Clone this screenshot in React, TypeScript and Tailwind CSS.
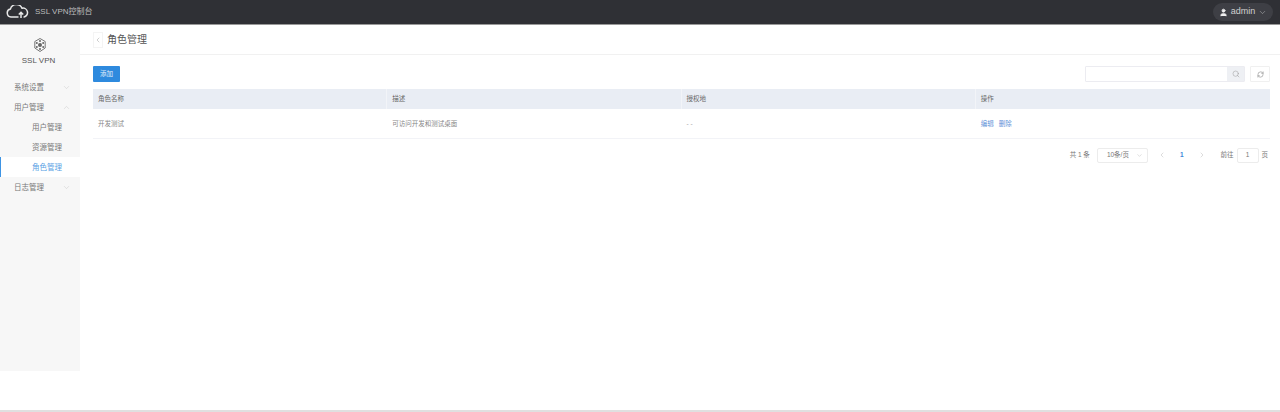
import React from "react";
import { ChevronDown, ChevronLeft, ChevronRight, ChevronUp, RefreshCw, Search, User } from "lucide-react";

const font = { fontFamily: '"Liberation Sans", "Noto Sans CJK SC", sans-serif' };

const CloudLogo = () => (
  <svg className="mb-[1px]" width="23" height="13" viewBox="0 0 23 13" fill="none" stroke="#e8e8e8" strokeWidth="1.500">
    <path d="M12.500 12H5a4 4 0 0 1-.6-7.900A6.200 6.200 0 0 1 16 3.200 4.500 4.500 0 0 1 18 12h-.5" />
    <path d="M12.800 9.500l2.200-2.200 2.200 2.200M15 7.500V13" />
  </svg>
);

const HexLogo = () => (
  <svg width="14" height="16" viewBox="0 0 14 16" fill="none" stroke="#777" strokeWidth="1">
    <path d="M7 1.500l5.200 3v6.500L7 14.500l-5.200-3.500V4.500z" />
    <circle cx="7" cy="8" r="2" fill="#666" stroke="none" />
    <circle cx="7" cy="4" r="1" fill="#666" stroke="none" />
    <circle cx="7" cy="12" r="1" fill="#666" stroke="none" />
    <circle cx="3.800" cy="6" r="1" fill="#666" stroke="none" />
    <circle cx="10.200" cy="6" r="1" fill="#666" stroke="none" />
    <circle cx="3.800" cy="10" r="1" fill="#666" stroke="none" />
    <circle cx="10.200" cy="10" r="1" fill="#666" stroke="none" />
  </svg>
);

const MenuGroup = ({ label, open }: { label: string; open?: boolean }) => (
  <div className="flex h-5 items-center justify-between pl-[14px] pr-[9px] pt-[1px] text-[7.500px] text-[#777]">
    <span>{label}</span>
    {open ? (
      <ChevronUp size={9} strokeWidth={1} color="#bbb" />
    ) : (
      <ChevronDown size={9} strokeWidth={1} color="#bbb" />
    )}
  </div>
);

const SubItem = ({ label, active }: { label: string; active?: boolean }) => (
  <div
    className={
      active
        ? "flex h-5 items-center border-l-[1.500px] border-[#3e94e4] bg-white pl-[31px] pt-[1px] text-[7.500px] text-[#5a9fe4]"
        : "flex h-5 items-center pl-[32px] pt-[1px] text-[7.500px] text-[#777]"
    }
  >
    {label}
  </div>
);

const Sidebar = () => (
  <aside className="flex w-20 shrink-0 flex-col bg-[#f7f7f7]">
    <div className="flex h-[52px] flex-col items-center pt-[12px]">
      <HexLogo />
      <span className="mr-[3px] mt-[3px] text-[8px] leading-[10px] text-[#555]">SSL VPN</span>
    </div>
    <MenuGroup label="系统设置" />
    <MenuGroup label="用户管理" open />
    <SubItem label="用户管理" />
    <SubItem label="资源管理" />
    <SubItem label="角色管理" active />
    <MenuGroup label="日志管理" />
  </aside>
);

const columns = ["角色名称", "描述", "授权地", "操作"];

const RoleTable = () => (
  <div className="mt-[7px] text-[6.500px]">
    <div className="grid h-5 grid-cols-4 bg-[#e9edf4] text-[#666]">
      {columns.map((c) => (
        <div key={c} className="flex items-center border-r border-[#f2f4f8] pl-[5px] last:border-r-0">
          {c}
        </div>
      ))}
    </div>
    <div className="grid h-[30px] grid-cols-4 border-b border-[#f2f3f7] text-[#888]">
      <div className="flex items-center pl-[5px]">开发测试</div>
      <div className="flex items-center pl-[5px]">可访问开发和测试桌面</div>
      <div className="flex items-center pl-[5px] text-[#aaa]">- -</div>
      <div className="flex items-center gap-[5px] pl-[5px] text-[#5f93d8]">
        <span>编辑</span>
        <span>删除</span>
      </div>
    </div>
  </div>
);

const Pagination = () => (
  <div className="mt-[8px] flex h-[16px] items-center justify-end pr-[2px] text-[6.500px] text-[#777]">
    <span>共 1 条</span>
    <div className="ml-[7px] flex h-[15px] w-[51px] items-center justify-between rounded-[2px] border border-[#ececec] pl-[9px] pr-[4px]">
      <span>10条/页</span>
      <ChevronDown size={7} strokeWidth={1.500} color="#bbb" />
    </div>
    <ChevronLeft className="ml-[10px]" size={8} strokeWidth={1.200} color="#aaa" />
    <span className="ml-[14px] font-bold text-[#3d85d8]">1</span>
    <ChevronRight className="ml-[14px]" size={8} strokeWidth={1.200} color="#aaa" />
    <span className="ml-[15px]">前往</span>
    <div className="ml-[3px] flex h-[15px] w-[22px] items-center justify-center rounded-[2px] border border-[#ececec]">1</div>
    <span className="ml-[3px]">页</span>
  </div>
);

export default function App() {
  return (
    <div className="flex h-[412px] w-[1280px] flex-col overflow-hidden bg-white" style={font}>
      <header className="flex h-[25px] shrink-0 items-center justify-between border-b border-[#999] bg-[#2f3035] pl-[6px] pr-[7px]">
        <div className="flex items-center">
          <CloudLogo />
          <span className="ml-[6px] text-[8px] text-[#bdbdbd]">SSL VPN控制台</span>
        </div>
        <div className="flex h-[18px] w-[60px] items-center justify-center gap-[3px] rounded-full bg-[#3e3f45] text-[9px] text-[#d0d0d0]">
          <User size={9} fill="#eee" color="#eee" />
          <span>admin</span>
          <ChevronDown size={9} strokeWidth={1.200} color="#ccc" />
        </div>
      </header>

      <div className="flex h-[346px] shrink-0">
        <Sidebar />
        <main className="min-w-0 flex-1">
          <div className="flex h-[30px] items-center border-b border-[#f1f1f1] pl-[13px]">
            <div className="flex h-4 w-[10px] items-center justify-center border border-[#f4f4f4]">
              <ChevronLeft size={8} strokeWidth={1.200} color="#888" />
            </div>
            <span className="ml-[4px] text-[10px] text-[#555]">角色管理</span>
          </div>
          <div className="pl-[13px] pr-[10px] pt-[11px]">
            <div className="flex h-4 items-center justify-between">
              <button className="h-4 w-[27px] rounded-[1px] bg-[#2e8ade] text-[6.500px] text-[#e3effa]">添加</button>
              <div className="flex items-center">
                <div className="flex h-4 w-[160px] items-stretch rounded-[1px] border border-[#ececf1]">
                  <div className="flex-1" />
                  <div className="flex w-[17px] items-center justify-center bg-[#eef0f4]">
                    <Search size={8} strokeWidth={1.500} color="#999" />
                  </div>
                </div>
                <div className="ml-[5px] flex h-4 w-5 items-center justify-center rounded-[1px] border border-[#f0f0f0]">
                  <RefreshCw size={7} color="#888" />
                </div>
              </div>
            </div>
            <RoleTable />
            <Pagination />
          </div>
        </main>
      </div>

      <div className="flex-1" />
      <div className="h-[2px] shrink-0 bg-[#e0e0e0]" />
    </div>
  );
}
